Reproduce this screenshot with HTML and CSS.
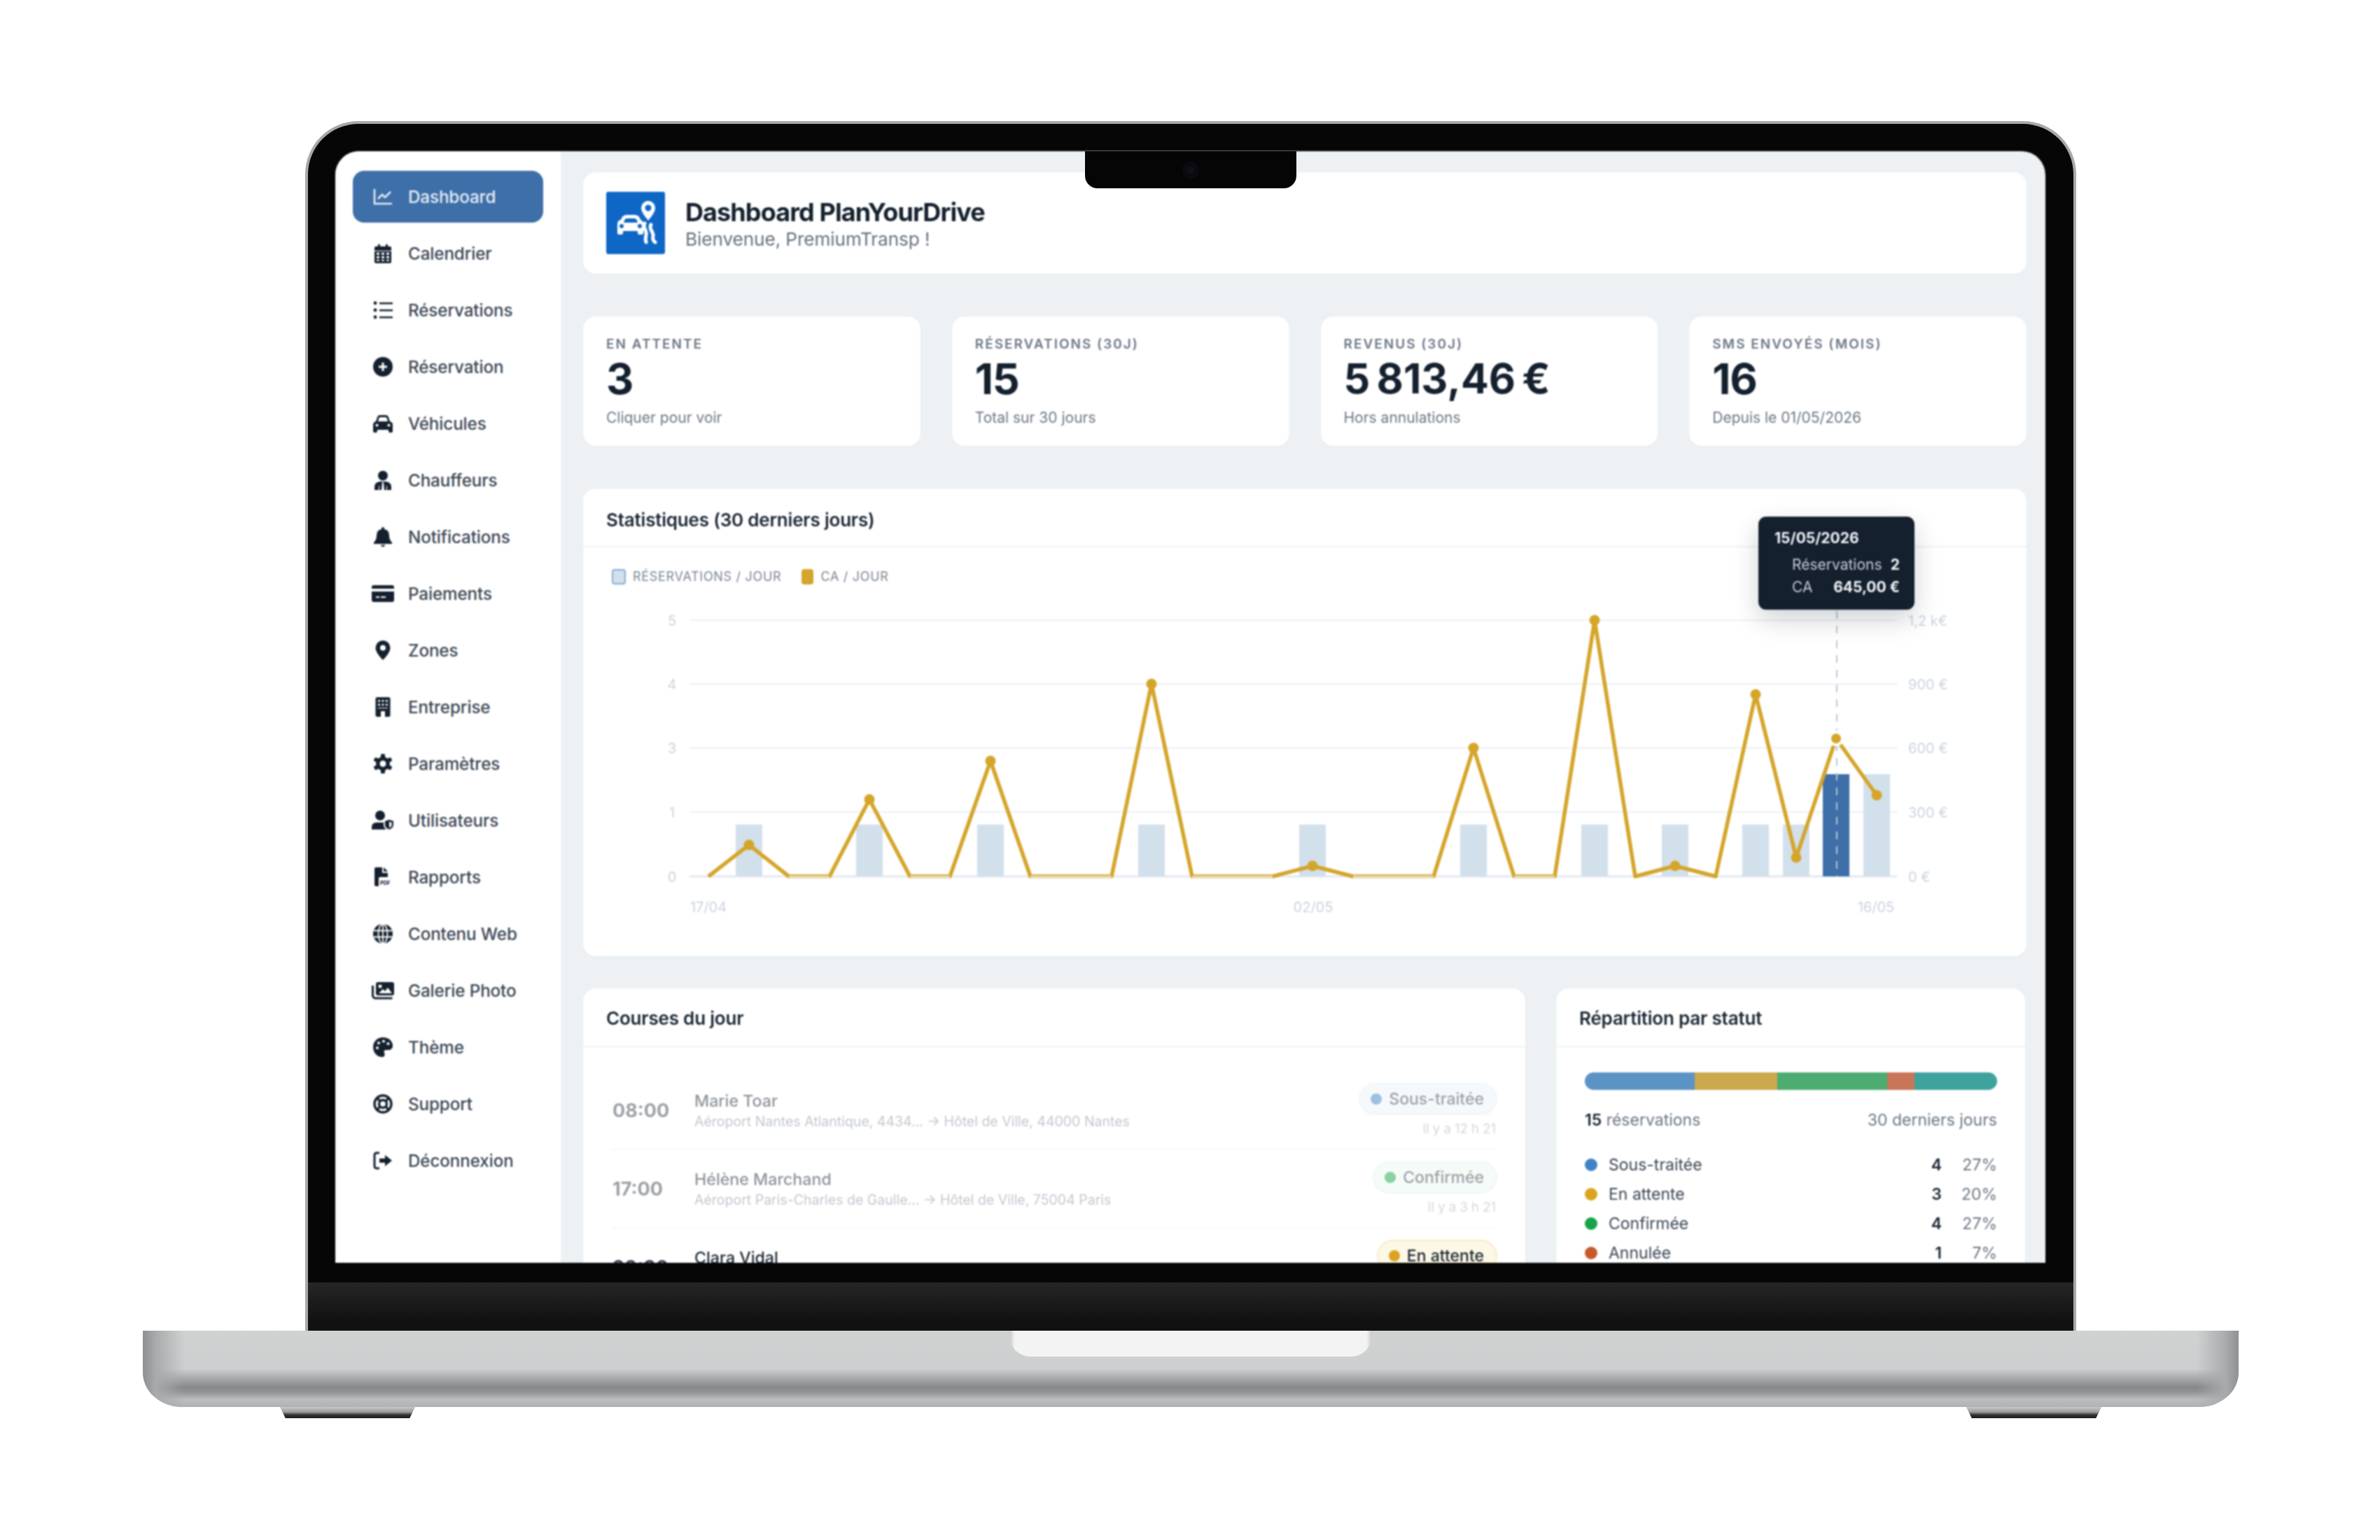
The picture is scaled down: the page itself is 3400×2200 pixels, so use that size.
FILE: index.html
```html
<!DOCTYPE html>
<html lang="fr">
<head>
<meta charset="utf-8">
<title>Dashboard PlanYourDrive</title>
<link rel="stylesheet" href="styles.css">
</head>
<body>
<div class="laptop">
  <div class="lid">
    <div class="notch"><span class="cam"></span></div>
    <div class="screen">
      <aside class="sidebar">
        <a class="nav active"><svg class="ico line" viewBox="0 0 28 28"><path d="M2 3v21h25"/><path d="M7 17l6-6 4 4 8-8"/></svg><span>Dashboard</span></a>
        <a class="nav"><svg class="ico" viewBox="0 0 28 28"><path d="M7 1h3v3h8V1h3v3h3a2 2 0 0 1 2 2v4H2V6a2 2 0 0 1 2-2h3z"/><path d="M2 11h24v15a2 2 0 0 1-2 2H4a2 2 0 0 1-2-2z"/><path class="cut" d="M5 13h4v3H5zM12 13h4v3h-4zM19 13h4v3h-4zM5 18h4v3H5zM12 18h4v3h-4zM19 18h4v3h-4zM5 23h4v2H5zM12 23h4v2h-4zM19 23h4v2h-4z"/></svg><span>Calendrier</span></a>
        <a class="nav"><svg class="ico" viewBox="0 0 28 28"><circle cx="3" cy="4" r="2.4"/><circle cx="3" cy="14" r="2.4"/><circle cx="3" cy="24" r="2.4"/><path d="M9 3h19v2.5H9zM9 13h19v2.5H9zM9 23h19v2.5H9z"/></svg><span>Réservations</span></a>
        <a class="nav"><svg class="ico" viewBox="0 0 28 28"><circle cx="14" cy="14" r="14"/><path class="cut" d="M12.5 8h3v4.500h4.500v3h-4.500V20h-3v-4.500H8v-3h4.500z"/></svg><span>Réservation</span></a>
        <a class="nav"><svg class="ico" viewBox="0 0 28 28"><path d="M6 5Q7 2 10 2h8q3 0 4 3l2 6q4 1 4 5v9a2 2 0 0 1-2 2h-2a2 2 0 0 1-2-2v-2H6v2a2 2 0 0 1-2 2H2a2 2 0 0 1-2-2v-9q0-4 4-5z"/><path class="cut" d="M8.500 6q.4-1 1.500-1h8q1 0 1.500 1l1.500 5H7z"/><circle class="cut" cx="5.500" cy="16.500" r="2"/><circle class="cut" cx="22.500" cy="16.500" r="2"/></svg><span>Véhicules</span></a>
        <a class="nav"><svg class="ico" viewBox="0 0 28 28"><circle cx="14" cy="7.500" r="7"/><path d="M2 28v-4q0-7 7-8h10q7 1 7 8v4z"/><path class="cut" d="M13 17h2l1 11h-4zM8 22h1v6H8zM19 22h1v6h-1z"/></svg><span>Chauffeurs</span></a>
        <a class="nav"><svg class="ico" viewBox="0 0 28 28"><path d="M14 0a2 2 0 0 1 2 2v1q7 1 7 9 0 6 4 10v2H1v-2q4-4 4-10 0-8 7-9V2a2 2 0 0 1 2-2z"/><path d="M11 25.500h6a3 2.500 0 0 1-6 0z"/></svg><span>Notifications</span></a>
        <a class="nav"><svg class="ico wide" viewBox="0 0 32 28"><path d="M0 5a3 3 0 0 1 3-3h26a3 3 0 0 1 3 3v2H0z"/><path d="M0 11h32v12a3 3 0 0 1-3 3H3a3 3 0 0 1-3-3z"/><path class="cut" d="M6 18h5v2H6zM13 18h7v2h-7z"/></svg><span>Paiements</span></a>
        <a class="nav"><svg class="ico" viewBox="0 0 28 28"><path d="M14 0a10.500 10.500 0 0 1 10.500 10.500C24.500 17 17 24.500 14 28c-3-3.500-10.500-11-10.500-17.500A10.500 10.500 0 0 1 14 0z"/><circle class="cut" cx="14" cy="10.500" r="4"/></svg><span>Zones</span></a>
        <a class="nav"><svg class="ico" viewBox="0 0 28 28"><rect x="3.500" y="0" width="21" height="28" rx="2.500"/><path class="cut" d="M7 4h3v2.500H7zM12.500 4h3v2.500h-3zM18 4h3v2.500h-3zM7 9.500h3V12H7zM12.500 9.500h3V12h-3zM18 9.500h3V12h-3zM7 15h14v1H7zM11 20h6v8h-6z"/></svg><span>Entreprise</span></a>
        <a class="nav"><svg class="ico" viewBox="0 0 28 28"><rect x="11" y="0" width="6" height="28" rx="1.500"/><rect x="11" y="0" width="6" height="28" rx="1.500" transform="rotate(60 14 14)"/><rect x="11" y="0" width="6" height="28" rx="1.500" transform="rotate(120 14 14)"/><circle cx="14" cy="14" r="10"/><circle class="cut" cx="14" cy="14" r="4.500"/></svg><span>Paramètres</span></a>
        <a class="nav"><svg class="ico wide" viewBox="0 0 32 28"><circle cx="12" cy="7" r="7"/><path d="M0 27v-3q0-7 7-7h10q2 0 3.500 1v9z"/><circle class="cut" cx="25" cy="20" r="8"/><path d="M25 13l6 2v5q0 5-6 7-6-2-6-7v-5z"/><path class="cut" d="M25 16l3.500 1v3q0 3-3.500 4.500z"/></svg><span>Utilisateurs</span></a>
        <a class="nav"><svg class="ico" viewBox="0 0 28 28"><path d="M2 2a2 2 0 0 1 2-2h9v8h8v6H10q-2 0-2 2v11H4a2 2 0 0 1-2-2z"/><path d="M15 0l6 6h-6z"/><text class="tiny" x="10" y="25">PDF</text></svg><span>Rapports</span></a>
        <a class="nav"><svg class="ico" viewBox="0 0 28 28"><circle cx="14" cy="14" r="14"/><ellipse class="cutline" cx="14" cy="14" rx="6.500" ry="14"/><path class="cutline" d="M1 9.500h26M1 18.500h26M14 0v28"/></svg><span>Contenu Web</span></a>
        <a class="nav"><svg class="ico wide" viewBox="0 0 32 28"><path class="hollow" d="M1.500 7v14a4 4 0 0 0 4 4h24"/><rect x="6" y="2" width="26" height="19" rx="3"/><circle class="cut" cx="12" cy="8" r="2.500"/><path class="cut" d="M10 18l6-6 3 3 4-5 6 8z"/></svg><span>Galerie Photo</span></a>
        <a class="nav"><svg class="ico" viewBox="0 0 28 28"><path d="M14 0c8 0 14 5 14 12 0 4-3 6-6 6h-4c-2 0-3 2-2 4 1 2 1 6-3 6C6 28 0 22 0 14S6 0 14 0z"/><circle class="cut" cx="6" cy="15" r="2"/><circle class="cut" cx="8" cy="8" r="2"/><circle class="cut" cx="15" cy="5.500" r="2"/><circle class="cut" cx="21.500" cy="9" r="2"/></svg><span>Thème</span></a>
        <a class="nav"><svg class="ico line thick" viewBox="0 0 28 28"><circle cx="14" cy="14" r="12"/><circle cx="14" cy="14" r="5.500"/><path d="M5.500 5.500l4.600 4.600M22.500 5.500l-4.600 4.600M5.500 22.500l4.600-4.600M22.500 22.500l-4.600-4.600"/></svg><span>Support</span></a>
        <a class="nav"><svg class="ico" viewBox="0 0 28 28"><path class="hollow" d="M9 3H5a3 3 0 0 0-3 3v16a3 3 0 0 0 3 3h4"/><path d="M9 11h8V6l10 8-10 8v-5H9z"/></svg><span>Déconnexion</span></a>
      </aside>

      <main class="main">
        <header class="card head">
          <svg class="logo" viewBox="0 0 84 89">
            <rect class="logo-bg" width="84" height="89" rx="3"/>
            <path class="logo-w" d="M21 40q2-7 8-7h12q6 0 8 7l2 1q2 2 2 6v12a2 2 0 0 1-2 2h-4a2 2 0 0 1-2-2v-3H24v3a2 2 0 0 1-2 2h-4a2 2 0 0 1-2-2V47q0-4 2-6z"/>
            <path class="logo-b" d="M26 41q1-3 4-3h10q3 0 4 3l1 3H25z"/>
            <circle class="logo-b" cx="22" cy="49" r="3"/><circle class="logo-b" cx="48" cy="49" r="3"/>
            <path class="logo-w" d="M60 13a10 10 0 0 1 10 10c0 6-6 13-10 18-4-5-10-12-10-18a10 10 0 0 1 10-10z"/>
            <circle class="logo-b" cx="60" cy="23" r="4.500"/>
            <path class="logo-road" d="M55 45c-4 6 4 10 2 17-1 4-1 7 0 10M64 47c-4 6 4 10 3 16-1 4 0 7 3 9"/>
          </svg>
          <div class="head-text">
            <h1>Dashboard PlanYourDrive</h1>
            <p>Bienvenue, PremiumTransp !</p>
          </div>
        </header>

        <section class="stats">
          <div class="card stat"><div class="stat-label">EN ATTENTE</div><div class="stat-value">3</div><div class="stat-sub">Cliquer pour voir</div></div>
          <div class="card stat"><div class="stat-label">RÉSERVATIONS (30J)</div><div class="stat-value">15</div><div class="stat-sub">Total sur 30 jours</div></div>
          <div class="card stat"><div class="stat-label">REVENUS (30J)</div><div class="stat-value stat-money">5&#8239;813,46&#8239;€</div><div class="stat-sub">Hors annulations</div></div>
          <div class="card stat"><div class="stat-label">SMS ENVOYÉS (MOIS)</div><div class="stat-value">16</div><div class="stat-sub">Depuis le 01/05/2026</div></div>
        </section>

        <section class="card chart-card">
          <h2 class="card-title">Statistiques (30 derniers jours)</h2>
          <div class="legend">
            <span class="swatch swatch-bar"></span><span class="legend-text">RÉSERVATIONS / JOUR</span>
            <span class="swatch swatch-line"></span><span class="legend-text">CA / JOUR</span>
          </div>
          <svg class="chart" viewBox="833 859 2062 506">
            <path class="grid" d="M985 885H2710M985 976H2710M985 1067.500H2710M985 1159H2710"/>
            <path class="axis" d="M985 1251H2710"/>
            <g class="bars">
              <rect x="1051" y="1177" width="38" height="74"/><rect x="1223" y="1177" width="38" height="74"/><rect x="1396" y="1177" width="38" height="74"/><rect x="1626" y="1177" width="38" height="74"/><rect x="1856" y="1177" width="38" height="74"/><rect x="2086" y="1177" width="38" height="74"/><rect x="2259" y="1177" width="38" height="74"/><rect x="2374" y="1177" width="38" height="74"/><rect x="2489" y="1177" width="38" height="74"/><rect x="2547" y="1177" width="38" height="74"/><rect class="bar-on" x="2604" y="1105" width="38" height="146"/><rect x="2662" y="1105" width="38" height="146"/>
            </g>
            <polyline class="ca" points="1012,1251 1070,1206 1127,1251 1185,1251 1242,1141 1300,1251 1357,1251 1415,1086 1472,1251 1530,1251 1588,1251 1645,976 1703,1251 1760,1251 1818,1251 1875,1236 1933,1251 1990,1251 2048,1251 2105,1067.500 2163,1251 2221,1251 2278,885 2336,1251 2393,1236 2451,1251 2508,991 2566,1224 2623,1054 2681,1135"/>
            <path class="ca-flat" d="M1127 1252H1185M1300 1252H1357M1472 1252H1588M1703 1252H1818M1933 1252H2048M2163 1252H2221"/>
            <path class="cross" d="M2624 872V1251"/>
            <g class="dots">
              <circle cx="1070" cy="1206" r="7.500"/><circle cx="1242" cy="1141" r="7.500"/><circle cx="1415" cy="1086" r="7.500"/><circle cx="1645" cy="976" r="7.500"/><circle cx="1875" cy="1236" r="7.500"/><circle cx="2105" cy="1067.500" r="7.500"/><circle cx="2278" cy="885" r="7.500"/><circle cx="2393" cy="1236" r="7.500"/><circle cx="2508" cy="991" r="7.500"/><circle cx="2566" cy="1224" r="7.500"/><circle cx="2681" cy="1135" r="7.500"/>
              <circle class="dot-on" cx="2623" cy="1054" r="9"/>
            </g>
            <g class="y-left">
              <text x="960" y="893">5</text><text x="960" y="984">4</text><text x="960" y="1075">3</text><text x="960" y="1167">1</text><text x="960" y="1259">0</text>
            </g>
            <g class="y-right">
              <text x="2726" y="893">1,2 k€</text><text x="2726" y="984">900 €</text><text x="2726" y="1075">600 €</text><text x="2726" y="1167">300 €</text><text x="2726" y="1259">0 €</text>
            </g>
            <g class="x-labels">
              <text x="1012" y="1302">17/04</text><text x="1876" y="1302">02/05</text><text x="2680" y="1302">16/05</text>
            </g>
          </svg>
          <div class="tooltip">
            <div class="tip-date">15/05/2026</div>
            <div class="tip-row"><span>Réservations</span><b>2</b></div>
            <div class="tip-row"><span>CA</span><b>645,00 €</b></div>
          </div>
        </section>

        <section class="lower">
          <div class="card">
            <h2 class="card-title">Courses du jour</h2>
            <div class="rides">
              <div class="ride past">
                <div class="ride-time">08:00</div>
                <div class="ride-info"><div class="ride-name">Marie Toar</div><div class="ride-route">Aéroport Nantes Atlantique, 4434... → Hôtel de Ville, 44000 Nantes</div></div>
                <div class="ride-side"><span class="badge b-blue"><i></i>Sous-traitée</span><small>Il y a 12 h 21</small></div>
              </div>
              <div class="ride past">
                <div class="ride-time">17:00</div>
                <div class="ride-info"><div class="ride-name">Hélène Marchand</div><div class="ride-route">Aéroport Paris-Charles de Gaulle... → Hôtel de Ville, 75004 Paris</div></div>
                <div class="ride-side"><span class="badge b-green"><i></i>Confirmée</span><small>Il y a 3 h 21</small></div>
              </div>
              <div class="ride">
                <div class="ride-time">20:30</div>
                <div class="ride-info"><div class="ride-name">Clara Vidal</div><div class="ride-route">Aéroport Nantes Atlantique → Hôtel de Ville, 44000 Nantes</div></div>
                <div class="ride-side"><span class="badge b-gold"><i></i>En attente</span><small>Dans 3 h</small></div>
              </div>
            </div>
          </div>
          <div class="card">
            <h2 class="card-title">Répartition par statut</h2>
            <div class="split">
              <div class="split-bar"><span class="s1"></span><span class="s2"></span><span class="s3"></span><span class="s4"></span><span class="s5"></span></div>
              <div class="split-meta"><span><b>15</b> réservations</span><span>30 derniers jours</span></div>
              <ul class="split-list">
                <li><i class="d1"></i><span>Sous-traitée</span><b>4</b><em>27%</em></li>
                <li><i class="d2"></i><span>En attente</span><b>3</b><em>20%</em></li>
                <li><i class="d3"></i><span>Confirmée</span><b>4</b><em>27%</em></li>
                <li><i class="d4"></i><span>Annulée</span><b>1</b><em>7%</em></li>
              </ul>
            </div>
          </div>
        </section>
      </main>
    </div>
    <div class="chin"></div>
  </div>
  <div class="base"><div class="thumb"></div></div>
  <div class="feet"><span class="foot"></span><span class="foot"></span></div>
</div>
</body>
</html>
```
FILE: styles.css
```css
* { box-sizing: border-box; }
html, body { margin: 0; padding: 0; background: #fff; }
body { width: 3400px; height: 2200px; overflow: hidden; font-family: Inter, "Liberation Sans", sans-serif; color: #14202e; }

.laptop { width: 3400px; padding-top: 173px; padding-left: 2px; display: flex; flex-direction: column; align-items: center; }

.lid { position: relative; width: 2530px; height: 1728px; padding: 39px 40px 0 39px; background: #060606; border: 4px solid #a8a8a8; border-bottom: 0; border-radius: 76px 76px 0 0; display: flex; flex-direction: column; }
.notch { position: absolute; z-index: 3; left: 1110px; top: 39px; width: 302px; height: 53px; background: #050505; border-radius: 0 0 18px 18px; display: flex; align-items: center; justify-content: center; }
.cam { width: 24px; height: 24px; border-radius: 50%; background: #10111a; box-shadow: inset 0 0 0 7px #0b0b0f; }
.screen { width: 2443px; height: 1588px; flex: none; display: flex; overflow: hidden; background: #edf1f4; border-radius: 34px 34px 0 0; filter: blur(1px); }
.chin { flex: 1; margin: 28px -40px 0 -39px; background: linear-gradient(#262626, #111 80%); }

.base { position: relative; width: 2994px; height: 109px; display: flex; justify-content: center; border-radius: 0 0 56px 56px / 0 0 50px 50px; background: linear-gradient(#d0d1d1 0, #cdcecf 50%, #a9abac 62%, #86888a 74%, #8f9193 80%, #bcbdbe 90%, #b0b1b2 100%); overflow: hidden; }
.base::before, .base::after { content: ""; position: absolute; top: 0; bottom: 0; width: 60px; }
.base::before { left: 0; background: linear-gradient(90deg, #8f9091, #a9aaab 30%, rgba(200,201,201,0)); }
.base::after { right: 0; background: linear-gradient(270deg, #8f9091, #a9aaab 30%, rgba(200,201,201,0)); }
.thumb { width: 518px; height: 37px; background: linear-gradient(90deg, #c8c8c8, #f3f3f3 1.500%, #f3f3f3 98.500%, #c8c8c8); border-radius: 0 0 30px 30px; }
.feet { width: 2994px; padding: 0 196px; display: flex; justify-content: space-between; }
.foot { width: 193px; height: 16px; background: linear-gradient(#c8c8c8, #9a9a9a 45%, #333 70%, #1c1c1c); clip-path: polygon(0 0, 100% 0, 96% 100%, 4% 100%); }

.sidebar { width: 324px; flex: none; padding: 28px 25px 0; background: #fff; border-right: 2px solid #eef2f5; display: flex; flex-direction: column; gap: 7px; }
.nav { height: 74px; padding-left: 26px; display: flex; align-items: center; gap: 19px; border-radius: 16px; font-size: 24.200px; font-weight: 500; color: #3b4654; letter-spacing: -.1px; white-space: nowrap; }
.nav.active { background: #3e6fa8; color: #e4edf6; }
.ico { width: 28px; height: 28px; margin: 0 3px; flex: none; fill: #14202e; }
.ico.wide { width: 32px; margin: 0 1px; }
.ico.line { fill: none; stroke: #e4edf6; stroke-width: 2.6; }
.ico.line.thick { stroke: #14202e; stroke-width: 3.4; }
.cut { fill: #fff; }
.cutline { fill: none; stroke: #fff; stroke-width: 1.800; }
.hollow { fill: none; stroke: #14202e; stroke-width: 3; }
.tiny { font-size: 7.500px; font-weight: 700; fill: #14202e; }

.main { flex: 1; min-width: 0; padding: 30px 27px 0 30px; }
.card { background: #fff; border-radius: 18px; box-shadow: 0 0 0 1px #e8edf1, 0 1px 3px rgba(20,32,46,.04); }

.head { height: 145px; padding: 28px 33px; display: flex; align-items: center; gap: 29px; }
.logo { width: 84px; height: 89px; flex: none; }
.logo-bg { fill: #0e67c5; }
.logo-w { fill: #fff; }
.logo-b { fill: #0e67c5; }
.logo-road { fill: none; stroke: #fff; stroke-width: 5; stroke-linecap: round; }
.head-text h1 { margin: 0; font-size: 36px; line-height: 44px; font-weight: 700; letter-spacing: -.9px; color: #14202e; }
.head-text p { margin: 2px 0 0; font-size: 26.200px; line-height: 30px; color: #66717f; letter-spacing: -.1px; }

.stats { margin-top: 61px; display: grid; grid-template-columns: repeat(4, 1fr); gap: 45px; }
.stat { height: 185px; padding: 28px 33px 0; }
.stat-label { font-size: 19px; line-height: 24px; font-weight: 600; letter-spacing: 2px; color: #6b7685; }
.stat-value { margin-top: 6px; font-size: 61px; line-height: 62px; font-weight: 700; letter-spacing: -1.400px; color: #14202e; }
.stat-value.stat-money { font-size: 59px; letter-spacing: -3.500px; }
.stat-sub { margin-top: 12px; font-size: 21px; line-height: 26px; color: #6b7685; }

.chart-card { position: relative; margin-top: 61px; height: 668px; }
.card-title { margin: 0; height: 84px; padding: 2px 33px 0; display: flex; align-items: center; font-size: 26px; font-weight: 600; letter-spacing: -.2px; color: #1b2734; border-bottom: 2px solid #eef2f5; }
.chart-card .card-title { padding-top: 6px; }
.legend { height: 78px; padding: 31px 0 0 41px; display: flex; align-items: flex-start; font-size: 18px; line-height: 22px; letter-spacing: .7px; color: #7b8594; }
.swatch { width: 20px; height: 22px; border-radius: 4px; margin-right: 10px; flex: none; }
.swatch-bar { background: #d2e0ec; border: 2px solid #87aad2; }
.swatch-line { width: 17px; background: #d4a52a; margin-left: 29px; }
.chart { display: block; width: 2062px; height: 506px; }
.grid { stroke: #eff2f5; stroke-width: 2.500; fill: none; }
.axis { stroke: #e4e9f2; stroke-width: 3; fill: none; }
.bars rect { fill: #d2e0ec; }
.bars .bar-on { fill: #3e6fa8; }
.ca { fill: none; stroke: #d4a52a; stroke-width: 5.500; stroke-linejoin: round; }
.ca-flat { fill: none; stroke: #e7dcb4; stroke-width: 4; }
.cross { fill: none; stroke: #b9c6d6; stroke-width: 2; stroke-dasharray: 11 10; }
.dots circle { fill: #d4a52a; }
.dots .dot-on { stroke: #fff; stroke-width: 4; }
.y-left text, .y-right text, .x-labels text { font-size: 20px; fill: #cbd4df; }
.y-left text, .x-labels text { text-anchor: middle; }
.tooltip { position: absolute; z-index: 2; left: 1679px; top: 40px; width: 223px; height: 133px; padding: 19px 21px 0 23px; background: #14202e; border-radius: 11px; box-shadow: 0 14px 36px rgba(20,32,46,.2); color: #fff; font-size: 21px; line-height: 32px; }
.tip-date { font-weight: 700; font-size: 21px; line-height: 24px; margin-bottom: 10px; color: #eef2f6; }
.tip-row { display: flex; justify-content: space-between; padding-left: 25px; color: #c5ccd4; }
.tip-row b { font-weight: 700; color: #f1f4f7; }

.lower { margin-top: 46px; display: grid; grid-template-columns: 1346px 670px; gap: 44px; }
.lower .card { height: 500px; }
.rides { padding: 35px 42px 0 40px; }
.ride { height: 112px; flex: none; display: flex; align-items: center; border-bottom: 2px solid #f2f4f7; }
.ride.past { opacity: .5; }
.ride-time { width: 119px; padding-left: 2px; flex: none; font-size: 27px; font-weight: 700; color: #3b4654; }
.ride-info { flex: 1; min-width: 0; padding-top: 2px; }
.ride-name { font-size: 23.200px; line-height: 30px; font-weight: 500; color: #1b2734; }
.ride-route { font-size: 19.500px; line-height: 29px; color: #8590a0; }
.ride-side { display: flex; flex-direction: column; align-items: flex-end; gap: 10px; }
.ride-side small { font-size: 18.500px; line-height: 22px; color: #a8b1bc; }
.badge { height: 42px; padding: 0 17px 0 15px; display: flex; align-items: center; gap: 10px; border-radius: 21px; font-size: 23px; font-weight: 500; color: #3b4654; }
.badge i { width: 16px; height: 16px; border-radius: 50%; }
.b-blue { background: #eef5fb; box-shadow: 0 0 0 2px #e2edf6; }
.b-blue i { background: #3f82c4; }
.b-green { background: #ecf8f0; box-shadow: 0 0 0 2px #dff2e6; }
.b-green i { background: #16a34a; }
.b-gold { background: #fdf7e5; box-shadow: 0 0 0 2px #f6ebc8; color: #1b2734; }
.b-gold i { background: #d9a520; }

.split { padding: 36px 40px 0 41px; }
.split-bar { height: 25px; display: flex; border-radius: 13px; overflow: hidden; }
.split-bar span { display: block; }
.s1 { flex: 4; background: #5b93c5; }
.s2 { flex: 3; background: #cba94c; }
.s3 { flex: 4; background: #4cac71; }
.s4 { flex: 1; background: #c87558; }
.s5 { flex: 3; background: #3fa29d; }
.split-meta { margin-top: 29px; display: flex; justify-content: space-between; font-size: 23px; line-height: 28px; color: #6b7685; }
.split-meta b { color: #1b2734; font-weight: 600; }
.split-list { list-style: none; margin: 29px 0 0; padding: 0; }
.split-list li { height: 42px; display: flex; align-items: center; font-size: 23px; color: #3b4654; }
.split-list i { width: 18px; height: 18px; border-radius: 50%; margin-right: 16px; flex: none; }
.split-list span { flex: 1; }
.split-list b { font-weight: 600; color: #1b2734; }
.split-list em { width: 79px; text-align: right; font-style: normal; color: #6b7685; }
.d1 { background: #3f82c4; }
.d2 { background: #d9a520; }
.d3 { background: #16a34a; }
.d4 { background: #c8592a; }
```
